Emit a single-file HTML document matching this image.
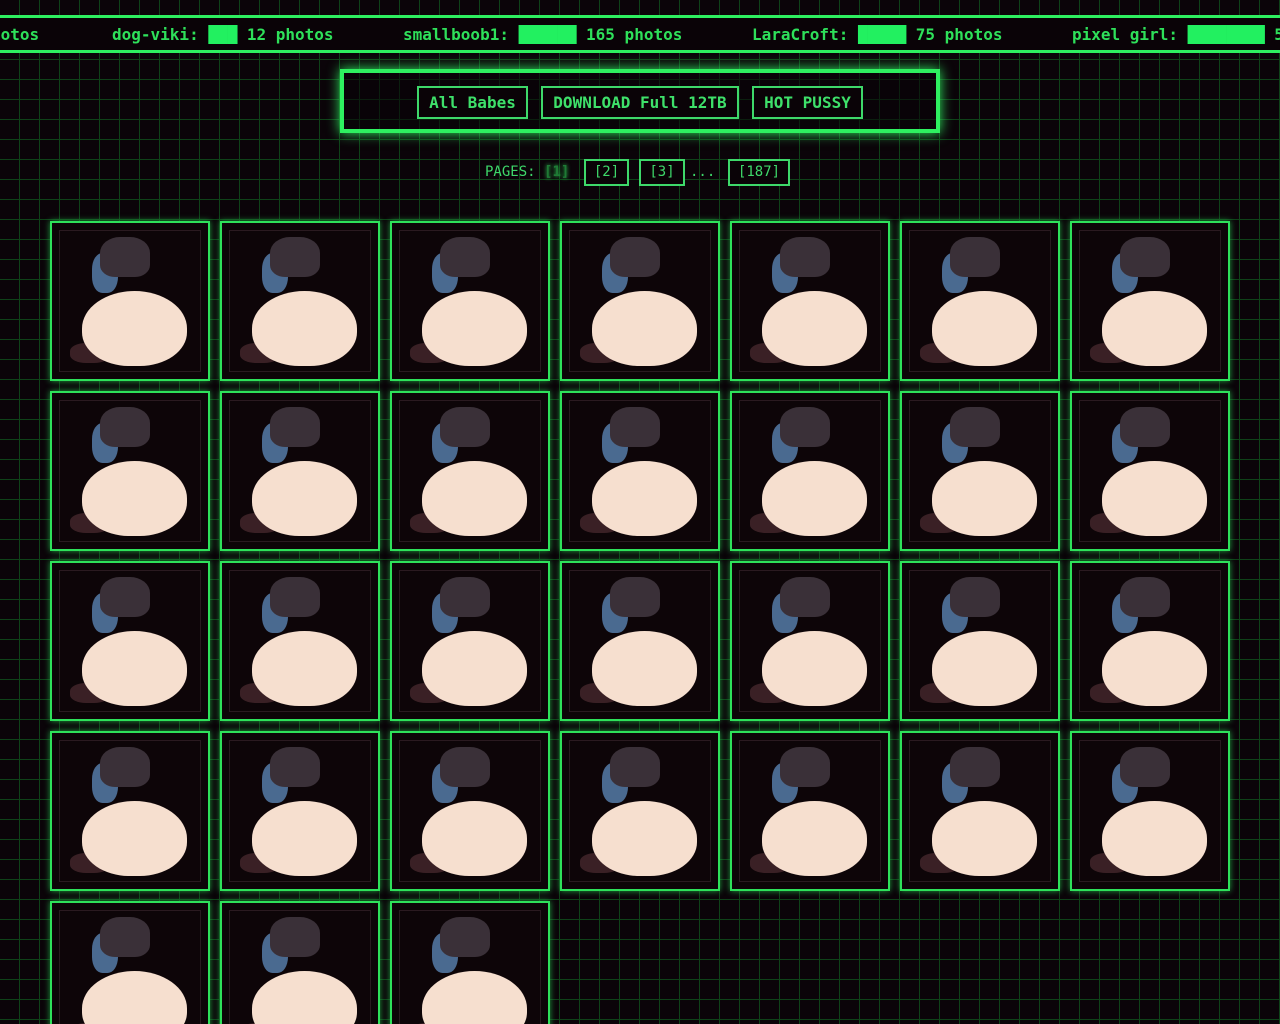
<!DOCTYPE html>
<html><head><meta charset="utf-8"><style>
*{margin:0;padding:0;box-sizing:border-box}
html,body{width:1280px;height:1024px;overflow:hidden}
body{background-color:#0b0409;
background-image:linear-gradient(to right,#0f4219 1px,transparent 1px),linear-gradient(to bottom,#0f4219 1px,transparent 1px);
background-size:20px 20px;background-position:19px 19px;
font-family:"DejaVu Sans Mono","Liberation Mono",monospace;color:#2ee05a;position:relative}
.ticker{position:absolute;left:0;top:15px;width:1280px;height:38px;background:#0a0307;border-top:3px solid #2ef060;border-bottom:3px solid #2ef060;white-space:nowrap;font-weight:bold;font-size:16px;line-height:33px;overflow:hidden}
.ticker>span{position:absolute;top:0}
.blk{color:#22f060}
.box{position:absolute;left:340px;top:69px;width:600px;height:64px;border:4px solid #2ef060;box-shadow:0 0 12px #2ef060;background:rgba(10,3,7,.55)}
.btn{position:absolute;top:13px;height:33px;border:2px solid #3ed86a;background:#0a0307;font-weight:bold;font-size:16px;line-height:29px;text-align:center;color:#3ee06a}
.pages{position:absolute;top:159px;font-size:14px;color:#3ed86a}
.pg{position:absolute;top:159px;height:27px;border:2px solid #3ed86a;font-size:14px;line-height:23px;text-align:center;color:#3ed86a;background:#0a0307}
.tile{position:absolute;width:160px;height:160px;border:2px solid #2ee05a;box-shadow:0 0 6px #1fa040;background:#0d0508;overflow:hidden}
.tile:before{content:"";position:absolute;left:7px;top:7px;right:7px;bottom:7px;border:1px solid #2a1a20}
.h{position:absolute;left:48px;top:14px;width:50px;height:40px;border-radius:40% 40% 30% 30%;background:#3a3038}
.hr{position:absolute;left:40px;top:30px;width:26px;height:40px;border-radius:40%;background:#4a6a90}
.b{position:absolute;left:30px;top:68px;width:105px;height:75px;border-radius:50% 50% 45% 45%;background:#f6dfcf}
.l{position:absolute;left:18px;top:120px;width:40px;height:20px;border-radius:40%;background:#3a2025}
</style></head><body>
<div class="ticker">
<span style="left:-9px">hotos</span>
<span style="left:112px">dog-viki: <span class="blk">███</span> 12 photos</span>
<span style="left:403px">smallboob1: <span class="blk">██████</span> 165 photos</span>
<span style="left:752px">LaraCroft: <span class="blk">█████</span> 75 photos</span>
<span style="left:1072px">pixel girl: <span class="blk">████████</span> 5</span>
</div>
<div class="box">
<div class="btn" style="left:73px;width:111px">All Babes</div>
<div class="btn" style="left:197px;width:198px">DOWNLOAD Full 12TB</div>
<div class="btn" style="left:408px;width:111px">HOT PUSSY</div>
</div>
<div class="pages" style="left:485px;line-height:27px">PAGES: <span style="color:#1f7a35;font-weight:bold;text-shadow:0 0 4px #2ee05a">[1]</span></div>
<div class="pg" style="left:584px;width:45px">[2]</div>
<div class="pg" style="left:639px;width:46px">[3]</div>
<div class="pages" style="left:690px;line-height:27px">...</div>
<div class="pg" style="left:728px;width:62px">[187]</div>
<div id="g"></div>
<script>
var h='';
for(var r=0;r<5;r++)for(var c=0;c<7;c++){if(r==4&&c>2)break;
h+='<div class="tile" style="left:'+(50+170*c)+'px;top:'+(221+170*r)+'px"><div class="l"></div><div class="b"></div><div class="hr"></div><div class="h"></div></div>';}
document.getElementById('g').innerHTML=h;
</script>
</body></html>
